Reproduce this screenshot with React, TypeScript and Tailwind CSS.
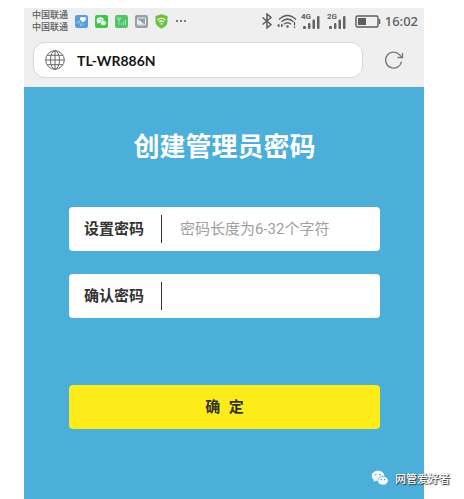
import { useState } from "react";
import type { ReactNode } from "react";

const SignalBars = ({ label }: { label: string }) => (
  <svg viewBox="0 0 20 18" className="h-[18px] w-5" role="img" aria-label={label}>
    <text x="0" y="7" fontSize="8" fontWeight="700" fill="#636363" className="font-['Roboto',sans-serif]">
      {label}
    </text>
    <g fill="#636363">
      <rect x="2" y="14" width="3" height="3" rx="1" />
      <rect x="7" y="11" width="2.400" height="6" rx="1" />
      <rect x="11.500" y="7.500" width="2.500" height="9.500" rx="1" />
      <rect x="16" y="4" width="2.500" height="13" rx="1" />
    </g>
  </svg>
);

const AppBadge = ({ color, children }: { color: string; children: ReactNode }) => (
  <svg viewBox="0 0 13 13" className="size-[13px]" aria-hidden="true">
    <rect width="13" height="13" rx="2.2" fill={color} />
    {children}
  </svg>
);

const StatusBar = () => (
  <div className="flex h-[26px] items-center justify-between pl-2 pr-1.5 text-[#5d5d5d]">
    <div className="flex items-center gap-[7px]">
      <div className="text-[9px] font-medium leading-3">
        <p>中国联通</p>
        <p>中国联通</p>
      </div>
      <AppBadge color="#5a9ed9">
        <path d="M8 7.300C5.700 5.800 5 4.700 5 3.500c0-1.700 2.100-2 3-.7.9-1.300 3-1 3 .7 0 1.200-.7 2.300-3 3.800z" fill="#fff" />
        <path d="M1 8h1.500L4 5.500 6 11l1.500-2.500L9 10" fill="none" stroke="#a5cdf0" strokeWidth=".8" />
      </AppBadge>
      <AppBadge color="#3ec64a">
        <ellipse cx="5.200" cy="5.200" rx="3.500" ry="2.900" fill="#fff" />
        <path d="M2.700 7l-.4 2 2-1.200z" fill="#fff" />
        <ellipse cx="8.300" cy="7.900" rx="3" ry="2.500" fill="#fff" stroke="#3ec64a" strokeWidth=".6" />
        <g fill="#3ec64a">
          <circle cx="4" cy="4.600" r=".5" />
          <circle cx="6.300" cy="4.600" r=".5" />
          <circle cx="7.300" cy="7.400" r=".4" />
          <circle cx="9.300" cy="7.400" r=".4" />
        </g>
      </AppBadge>
      <AppBadge color="#4fc469">
        <path d="M2 3h4L4 5.500zM4 4v6M6.500 10V8M8.500 10V6.500M10.500 10V4.500" fill="none" stroke="#b5e9be" strokeWidth=".8" />
      </AppBadge>
      <AppBadge color="#94a0a6">
        <rect x="2.500" y="3" width="8" height="7" rx=".5" fill="none" stroke="#e9eef0" strokeWidth="1" />
        <path d="M3 5l2 .5L7.500 8 10 9.500H3z" fill="#e9eef0" />
      </AppBadge>
      <svg viewBox="0 0 13 15" className="h-[15px] w-[13px]" aria-hidden="true">
        <path d="M6.500.3L12.500 2v6c0 3-2.500 5-6 6.700C3 13 .5 11 .5 8V2z" fill="#6fc13c" />
        <path d="M2.500 6q4-3.500 8 0M4 8q2.500-2.200 5 0" fill="none" stroke="#fff" strokeWidth="1.100" />
        <circle cx="6.500" cy="9.800" r="1" fill="#fff" />
      </svg>
      <svg viewBox="0 0 12 4" className="h-1 w-3" fill="#555" aria-hidden="true">
        <circle cx="2" cy="2" r="1" />
        <circle cx="6" cy="2" r="1" />
        <circle cx="10" cy="2" r="1" />
      </svg>
    </div>

    <div className="flex items-center">
      <svg viewBox="0 0 12 16" className="h-4 w-3" fill="none" stroke="#5d5d5d" strokeWidth="1.500" aria-hidden="true">
        <path d="M1.500 4.500l8.500 7L6 15V1l4 3.500-8.500 7" />
      </svg>
      <svg viewBox="0 0 20 16" className="ml-1 h-4 w-5" fill="none" stroke="#5d5d5d" aria-hidden="true">
        <path d="M2 6.500q8.500-8 17 0M4.500 8.800q6-5.300 12 0M7 11.200q3.500-3 7 0" strokeWidth="1.500" />
        <circle cx="10.500" cy="13.500" r="1.300" fill="#5d5d5d" stroke="none" />
        <path d="M17.500 9v3.500M17.500 13.500V15" strokeWidth="1.300" />
        <path d="M2.500 10.500L0 12.500l2.500 2zM4 10.500l2.500 2-2.500 2z" fill="#5d5d5d" stroke="none" />
      </svg>
      <div className="ml-1 flex gap-1.5">
        <SignalBars label="4G" />
        <SignalBars label="2G" />
      </div>
      <svg viewBox="0 0 26 13" className="ml-2 h-[13px] w-[26px]" aria-hidden="true">
        <rect x="1" y="1" width="22" height="11" rx="1.500" fill="none" stroke="#5d5d5d" strokeWidth="1.400" />
        <rect x="3" y="3" width="8" height="7" fill="#5d5d5d" />
        <path d="M24.500 4v5" stroke="#5d5d5d" strokeWidth="1.500" />
      </svg>
      <span className="ml-1 font-['Noto_Sans',sans-serif] text-[13px] font-medium leading-4">16:02</span>
    </div>
  </div>
);

const AddressBar = () => (
  <div className="flex items-center pb-[9px] pl-[9px] pr-5 pt-2">
    <div className="flex h-9 flex-1 items-center gap-3 rounded-xl border border-[#d7d7d7] bg-white px-[11px]">
      <svg viewBox="0 0 20 20" className="size-5" fill="none" stroke="#666" strokeWidth="1" aria-hidden="true">
        <circle cx="10" cy="10" r="9.300" />
        <ellipse cx="10" cy="10" rx="4.500" ry="9.300" />
        <path d="M10 .7v18.600M.7 10h18.600M2.200 5.300h15.600M2.200 14.700h15.600" />
      </svg>
      <span className="font-['Lato','Noto_Sans_CJK_SC',sans-serif] text-[14px] font-bold text-[#151515]">TL-WR886N</span>
    </div>
    <button type="button" aria-label="刷新" className="ml-[21px]">
      <svg viewBox="0 0 20 20" className="size-5" fill="none" stroke="#777" strokeWidth="1.300" aria-hidden="true">
        <path d="M17.500 11.500a8 8 0 1 1-1.800-6.600L17.500 7" />
        <path d="M18.500 3v4.500H13.500" />
      </svg>
    </button>
  </div>
);

type FieldProps = {
  id: string;
  label: string;
  placeholder?: string;
  value: string;
  onChange: (value: string) => void;
};

const PasswordField = ({ id, label, placeholder, value, onChange }: FieldProps) => (
  <div className="flex h-11 items-center rounded bg-white pl-[15px] pr-4">
    <label htmlFor={id} className="w-[77px] shrink-0 text-[15px] font-bold text-[#333]">
      {label}
    </label>
    <input
      id={id}
      type="password"
      value={value}
      placeholder={placeholder}
      onChange={(e) => onChange(e.target.value)}
      className="h-7 min-w-0 flex-1 border-l border-[#333] pl-[18px] font-['Roboto','Noto_Sans_CJK_SC',sans-serif] text-[15px] text-[#333] outline-none placeholder:text-[#a0a0a0]"
    />
  </div>
);

const Watermark = () => (
  <div className="absolute bottom-3 right-3.5 flex items-center gap-1.5">
    <svg viewBox="0 0 18 17" className="h-[17px] w-[18px]" aria-hidden="true">
      <path d="M7 .8C3.500.8.7 3 .7 6c0 1.700 1 3.100 2.400 4l-.6 2 2.300-1.200c4.500 1 8.500-1.300 8.500-4.800C13.300 3 10.500.8 7 .8z" fill="#f2fbff" />
      <path d="M12 6.300c-3 0-5.300 1.900-5.300 4.400 0 3 3.300 5 6.500 4.100l2 1.200-.5-1.900c1.600-.8 2.600-2 2.600-3.400 0-2.500-2.400-4.400-5.300-4.400z" fill="#f2fbff" stroke="#4bafd9" strokeWidth=".7" />
      <g fill="#4b91af">
        <circle cx="4.800" cy="4.700" r=".8" />
        <circle cx="9" cy="4.700" r=".8" />
        <circle cx="10.200" cy="9.500" r=".7" />
        <circle cx="13.800" cy="9.500" r=".7" />
      </g>
    </svg>
    <span className="text-[11px] font-medium leading-4 text-white [text-shadow:1px_1px_1px_#333,0_0_1px_#555]">网管爱好者</span>
  </div>
);

export default function App() {
  const [password, setPassword] = useState("");
  const [confirm, setConfirm] = useState("");

  return (
    <div className="relative flex min-h-screen flex-col bg-white pl-6 pr-10 pt-2 font-['Liberation_Sans','Noto_Sans_CJK_SC',sans-serif]">
      <header className="bg-[#efefef]">
        <StatusBar />
        <AddressBar />
      </header>
      <main className="flex-1 bg-[#4bafd9] pb-12 pl-[45px] pr-11 pt-[42px]">
        <h1 className="text-center text-[26px] font-bold leading-9 text-white">创建管理员密码</h1>
        <form className="mt-[42px]" onSubmit={(e) => e.preventDefault()}>
          <div className="flex flex-col gap-[23px]">
            <PasswordField
              id="password"
              label="设置密码"
              placeholder="密码长度为6-32个字符"
              value={password}
              onChange={setPassword}
            />
            <PasswordField id="confirm" label="确认密码" value={confirm} onChange={setConfirm} />
          </div>
          <button type="submit" className="mt-[67px] h-11 w-full rounded bg-[#fdec19] text-[15px] font-bold text-[#333]">
            确&nbsp;&nbsp;定
          </button>
        </form>
      </main>
      <Watermark />
    </div>
  );
}
